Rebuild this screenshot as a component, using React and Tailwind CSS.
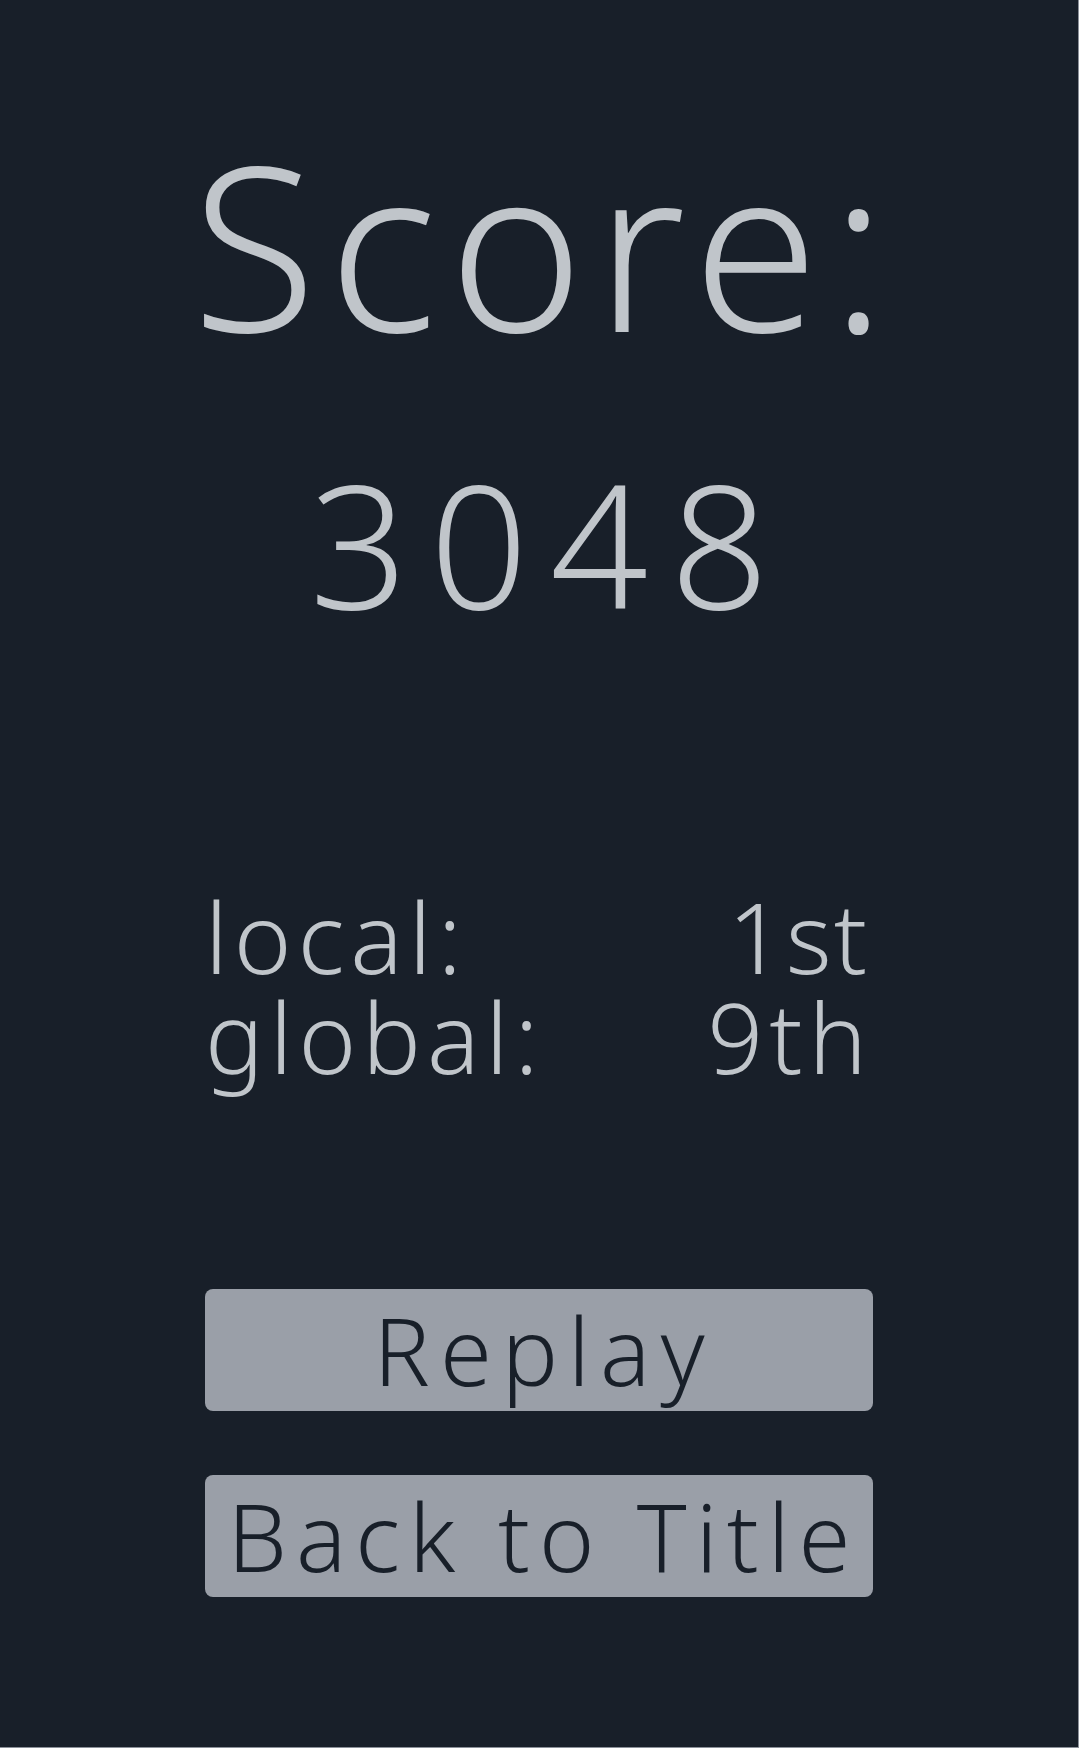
export default function App() {
  return (
    <div className="h-[1748px] bg-[#181f29] text-[#c0c5ca] font-['Noto_Sans',sans-serif] font-light flex flex-col items-center border-r border-b border-[#8b9099]">
      <div className="w-[668px] flex flex-col items-center">
        <h1 className="text-[228px] leading-none mt-[130px] tracking-[12px] pl-[12px]">Score:</h1>
        <p className="text-[172px] leading-none mt-[98px] tracking-[22px] pl-[22px]">3048</p>

        <div className="w-full mt-[258px] text-[98px] leading-[100px] tracking-[6px]">
          <div className="flex justify-between pr-[4px]">
            <span>local:</span>
            <span className="tracking-[2px]">1st</span>
          </div>
          <div className="flex justify-between">
            <span>global:</span>
            <span>9th</span>
          </div>
        </div>

        <div className="w-full mt-[203px] flex flex-col gap-[64px]">
          <button className="h-[122px] w-full rounded-[8px] bg-[#9a9fa8] text-[#181f29] text-[94px] leading-none tracking-[10px] pl-[10px]">
            Replay
          </button>
          <button className="h-[122px] w-full rounded-[8px] bg-[#9a9fa8] text-[#181f29] text-[94px] leading-none tracking-[9px] pl-[9px]">
            Back to Title
          </button>
        </div>
      </div>
    </div>
  );
}
